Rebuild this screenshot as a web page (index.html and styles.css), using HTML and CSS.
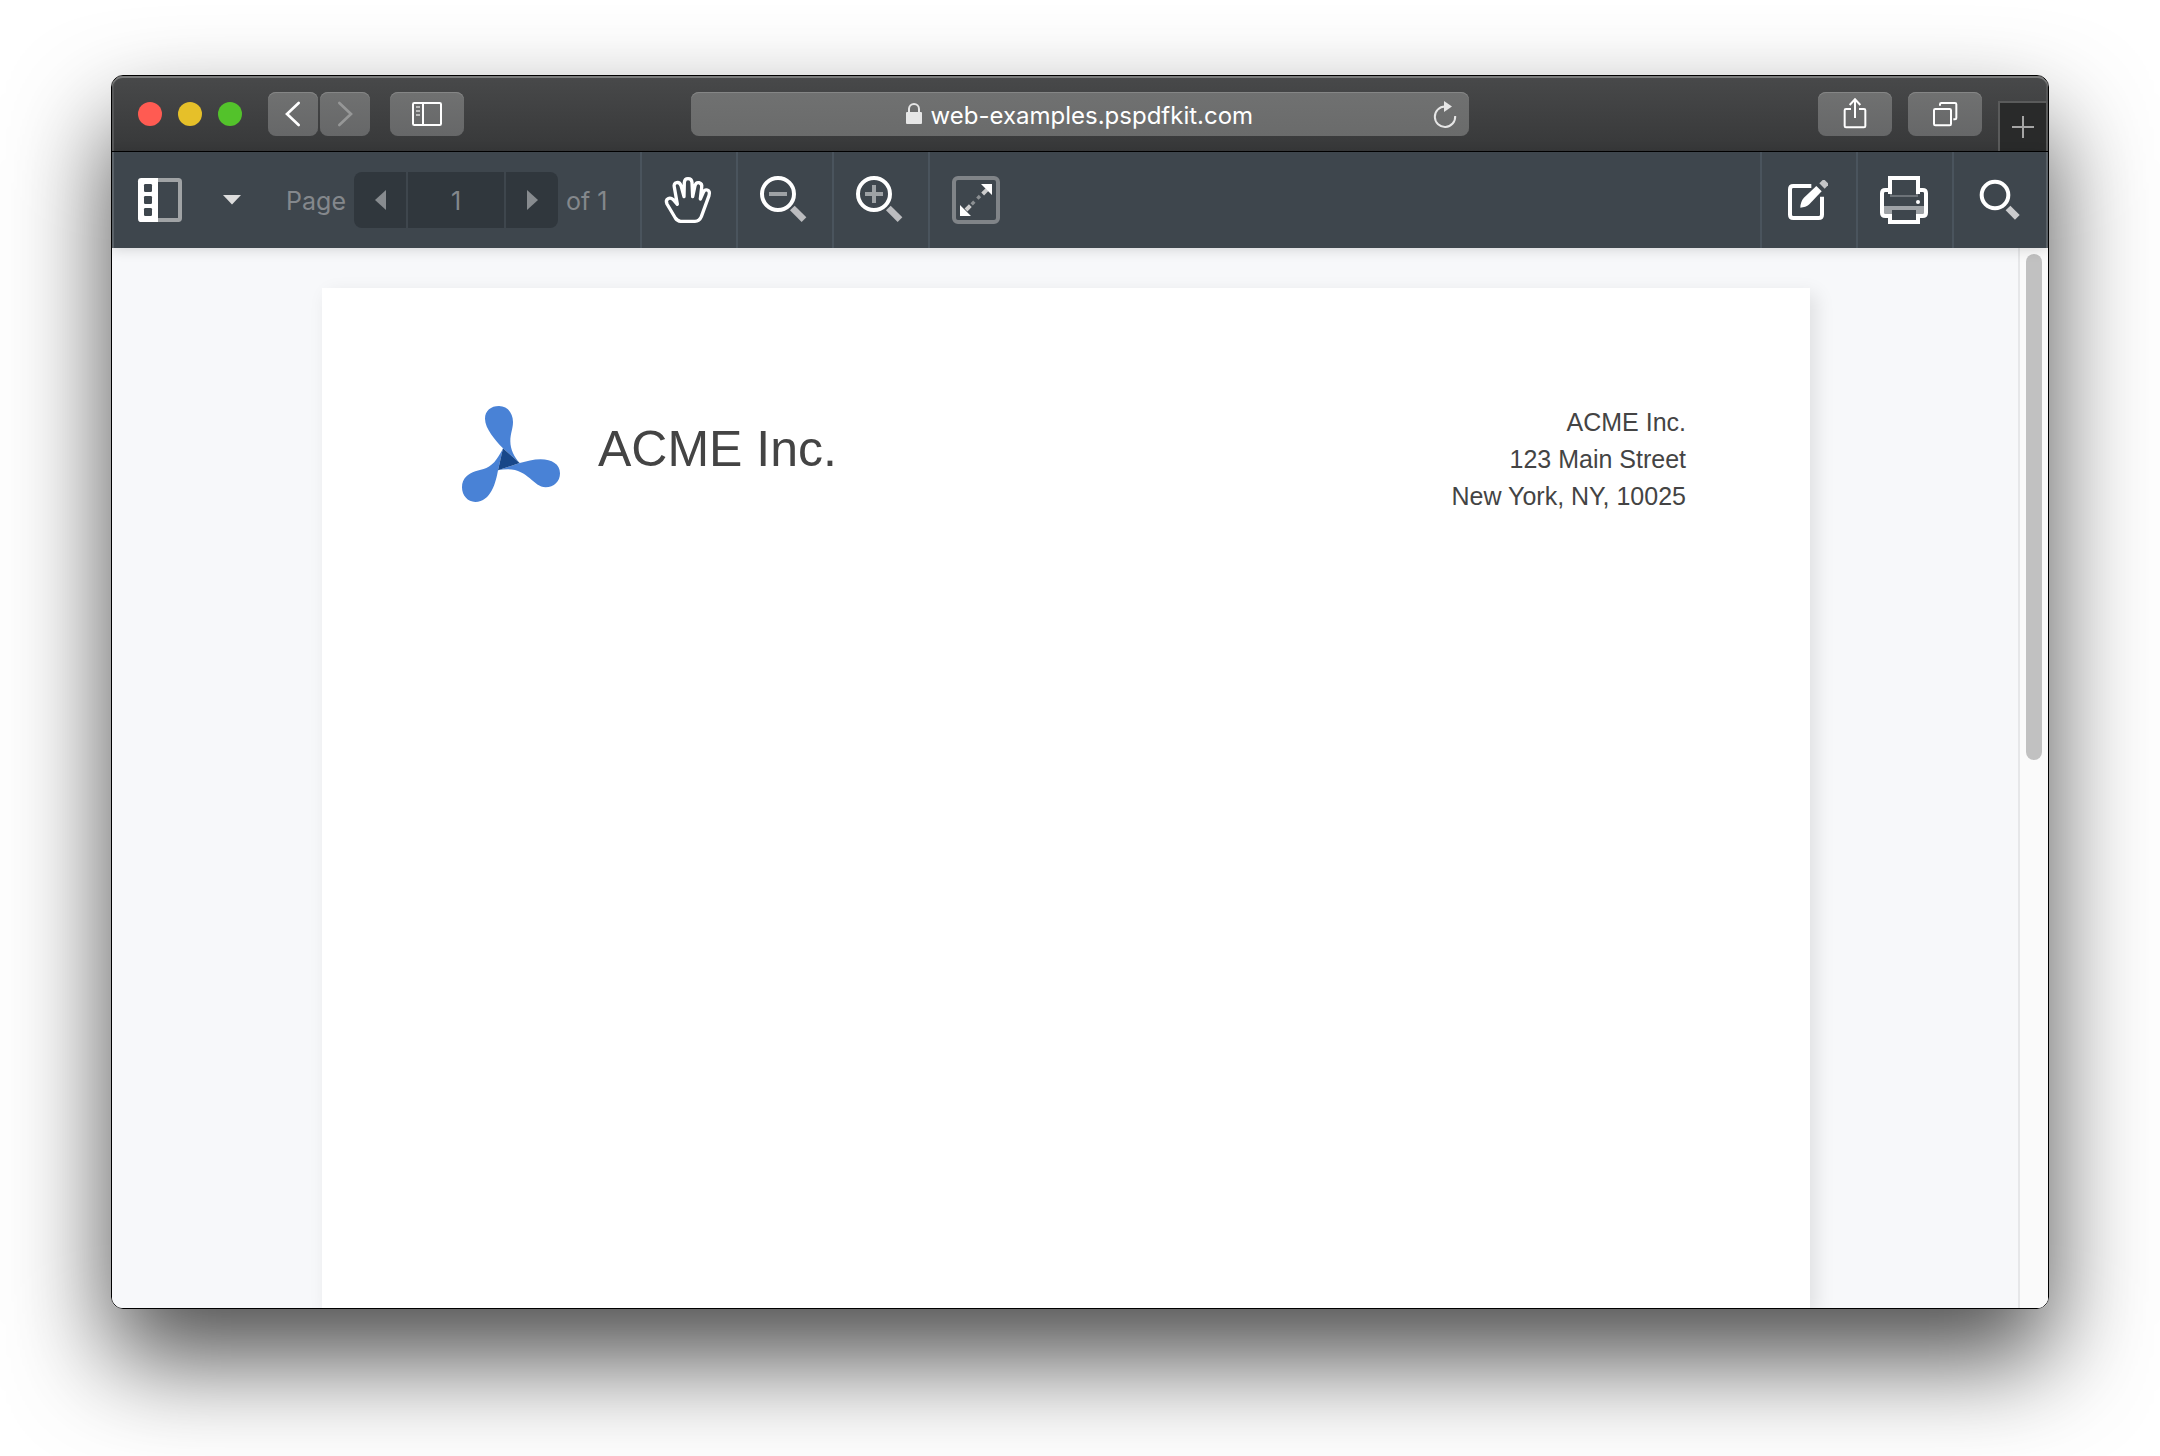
FILE: index.html
```html
<!DOCTYPE html>
<html lang="en">
<head>
<meta charset="utf-8">
<title>web-examples.pspdfkit.com</title>
<link rel="stylesheet" href="styles.css">
</head>
<body>
<div class="window">
  <header class="titlebar">
    <div class="lights">
      <button class="light light-close" aria-label="Close"></button>
      <button class="light light-minimize" aria-label="Minimize"></button>
      <button class="light light-zoom" aria-label="Zoom"></button>
    </div>
    <div class="history">
      <button class="chrome-button chrome-narrow" aria-label="Back">
        <svg width="50" height="44" viewBox="504 96 150 132"><path d="M596 129 L561 162 L596 195" fill="none" stroke="#fff" stroke-width="8" stroke-linecap="round"/></svg>
      </button>
      <button class="chrome-button chrome-narrow" aria-label="Forward">
        <svg width="50" height="44" viewBox="660 96 150 132"><path d="M718 129 L753 162 L718 195" fill="none" stroke="#969797" stroke-width="8" stroke-linecap="round"/></svg>
      </button>
    </div>
    <button class="chrome-button" aria-label="Show sidebar">
      <svg width="74" height="44" viewBox="870 96 222 132"><g fill="none" stroke="#fff" stroke-width="6"><rect x="939" y="129" width="84" height="66" rx="4"/><path d="M969 129V195"/></g><path d="M948 141H960M948 153H960M948 165H960" stroke="#bbb" stroke-width="6"/></svg>
    </button>
    <div class="address-slot">
      <div class="address-bar">
        <svg class="lock" width="18" height="22" viewBox="0 0 18 22"><path d="M4 10V6a5 5 0 0 1 10 0v4" fill="none" stroke="#e6e6e6" stroke-width="2"/><rect x="1" y="9" width="16" height="12" rx="1" fill="#e6e6e6"/></svg>
        <input class="address" type="text" aria-label="Address" value="web-examples.pspdfkit.com">
        <button class="reload" aria-label="Reload">
          <svg width="26" height="28" viewBox="0 0 26 28"><path d="M13 6.500A10.200 10.200 0 1 0 23.200 16" fill="none" stroke="#e6e6e6" stroke-width="2"/><path d="M12 1L20 6.500L12 12Z" fill="#e6e6e6"/></svg>
        </button>
      </div>
    </div>
    <div class="chrome-actions">
      <button class="chrome-button" aria-label="Share">
        <svg width="74" height="44" viewBox="234 96 222 132"><g fill="none" stroke="#fff" stroke-width="6"><path d="M333 147H318Q314 147 314 151V198Q314 202 318 202H372Q376 202 376 198V151Q376 147 372 147H357"/><path d="M345 174V120M329 135L345 118L361 135"/></g></svg>
      </button>
      <button class="chrome-button" aria-label="Show all tabs">
        <svg width="74" height="44" viewBox="504 96 222 132"><g fill="none" stroke="#fff" stroke-width="6"><rect x="582" y="147" width="51" height="49" rx="4"/><path d="M600 137V133Q600 129 604 129H645Q649 129 649 133V174Q649 178 645 178H640"/></g></svg>
      </button>
    </div>
    <button class="new-tab" aria-label="New tab">
      <svg width="22" height="22" viewBox="0 0 22 22"><path d="M11 0V22M0 11H22" stroke="#a5a5a5" stroke-width="2"/></svg>
    </button>
  </header>

  <nav class="toolbar" aria-label="Document tools">
    <button class="sidebar-toggle" aria-label="Sidebar">
      <svg width="44" height="44" viewBox="114 354 132 132"><path d="M174 360H235Q240 360 240 365V475Q240 480 235 480H174" fill="none" stroke="#a0a3a5" stroke-width="12"/><path d="M124 354H174V486H124Q114 486 114 476V364Q114 354 124 354Z" fill="#fff"/><g fill="#3e464d"><rect x="132" y="372" width="24" height="24" rx="4"/><rect x="132" y="408" width="24" height="24" rx="4"/><rect x="132" y="444" width="24" height="24" rx="4"/></g></svg>
      <svg width="18" height="10" viewBox="0 0 18 10"><path d="M0 0H18L9 9.500Z" fill="#ddd"/></svg>
    </button>
    <div class="pager">
      <label class="pager-label" for="page-number">Page</label>
      <div class="pager-control">
        <button class="pager-step" aria-label="Previous page"><svg width="11" height="20" viewBox="0 0 11 20"><path d="M11 0V20L0 10Z" fill="#878b8f"/></svg></button>
        <input class="pager-input" id="page-number" type="text" value="1">
        <button class="pager-step" aria-label="Next page"><svg width="11" height="20" viewBox="0 0 11 20"><path d="M0 0V20L11 10Z" fill="#878b8f"/></svg></button>
      </div>
      <span class="pager-total">of 1</span>
    </div>
    <button class="tool" aria-label="Pan">
      <svg width="48" height="48" viewBox="75 78 144 144"><path d="M122 214Q112 213 106 204L81 162Q76 150 84 146Q92 142 100 149L112 163L103 112Q100 100 110 98Q119 96 123 107L132 140L133 97Q134 86 144 86Q155 86 156 97L158 140L165 107Q168 96 177 98Q187 101 185 112L181 147L190 127Q194 118 202 120Q211 123 207 137L184 200Q178 214 165 214Z" fill="none" stroke="#fff" stroke-width="10" stroke-linejoin="round"/></svg>
    </button>
    <button class="tool" aria-label="Zoom out">
      <svg width="48" height="48" viewBox="363 78 144 144"><circle cx="414" cy="132" r="48" fill="none" stroke="#fff" stroke-width="12"/><path d="M387 132H441" stroke="#9ea2a5" stroke-width="12"/><path d="M457 174L492 209" stroke="#bbbcbf" stroke-width="20"/></svg>
    </button>
    <button class="tool" aria-label="Zoom in">
      <svg width="48" height="48" viewBox="651 78 144 144"><circle cx="702" cy="132" r="48" fill="none" stroke="#fff" stroke-width="12"/><path d="M675 132H729M702 105V159" stroke="#9ea2a5" stroke-width="12"/><path d="M745 174L780 209" stroke="#bbbcbf" stroke-width="20"/></svg>
    </button>
    <button class="tool" aria-label="Fit page">
      <svg width="48" height="48" viewBox="939 78 144 144"><rect x="942" y="84" width="132" height="132" rx="12" fill="none" stroke="#808488" stroke-width="12"/><path d="M978 180L991 167M1028 132L1041 119" stroke="#ccc" stroke-width="12"/><path d="M995 163L1003 155M1012 146L1020 138" stroke="#8b8f92" stroke-width="10"/><path d="M960 165V198H993ZM1023 102H1056V135Z" fill="#fff"/></svg>
    </button>
    <div class="spacer"></div>
    <button class="tool" aria-label="Annotate">
      <svg width="48" height="48" viewBox="135 348 144 144"><path d="M214 378H160Q150 378 150 388V464Q150 474 160 474H236Q246 474 246 464V410" fill="none" stroke="#fff" stroke-width="12"/><path d="M181 443Q181 426 191 414L229 378L245 394L208 433Q197 443 181 443Z" fill="#fff"/><path d="M238 370L248 360H254L264 370V376L254 386Z" fill="#c4c5c7"/></svg>
    </button>
    <button class="tool" aria-label="Print">
      <svg width="48" height="48" viewBox="423 348 144 144"><path d="M432 438H552V462H432Z" fill="#9fa3a7"/><path d="M456 450H528V480H456Z" fill="#3e464d"/><path d="M453 396V408H531V396" fill="none" stroke="#6c7278" stroke-width="6"/><path d="M450 402V354H534V402M450 390H436Q426 390 426 400V458Q426 468 436 468H450V486H534V468H548Q558 468 558 458V400Q558 390 548 390H534" fill="none" stroke="#fff" stroke-width="12"/><circle cx="534" cy="426" r="6" fill="#fff"/></svg>
    </button>
    <button class="tool" aria-label="Search">
      <svg width="48" height="48" viewBox="711 348 144 144"><circle cx="765" cy="405" r="40" fill="none" stroke="#fff" stroke-width="12"/><path d="M804 444L832 472" stroke="#cbccce" stroke-width="20"/></svg>
    </button>
  </nav>

  <main class="viewer">
    <div class="canvas">
      <article class="sheet">
        <header class="letterhead">
          <div class="brand">
            <svg width="98" height="98" viewBox="66 71 294 294"><g fill="#4982d6"><path d="M189 204C166 179 135 145 135 115C135 91 153 77 177 77C202 77 219 98 219 125C219 145 211 160 211 183C211 207 223 231 239 248Z"/><path d="M239 248C260 243 280 237 302 237C336 237 360 252 360 279C360 304 342 321 317 321C280 321 265 267 203 267C193 267 183 268 174 270Z"/><path d="M174 270C168 305 153 365 106 365C83 365 66 345 66 321C66 294 85 280 106 273C128 267 151 264 170 236C178 225 184 215 189 204Z"/></g><path d="M189 204L239 248L174 270Z" fill="#184789"/></svg>
            <span class="brand-name">ACME Inc.</span>
          </div>
          <address class="sender">ACME Inc.<br>123 Main Street<br>New York, NY, 10025</address>
        </header>
      </article>
    </div>
    <div class="scroll-track"><div class="scroll-thumb"></div></div>
  </main>
</div>
</body>
</html>
```
FILE: styles.css
```css
*, *::before, *::after {
  box-sizing: border-box;
}

body {
  display: flex;
  min-height: 100vh;
  margin: 0;
  padding: 75px 111px 147px;
  background: #fff;
  font-family: Inter, "Liberation Sans", sans-serif;
}

button {
  display: flex;
  align-items: center;
  justify-content: center;
  flex: none;
  margin: 0;
  padding: 0;
  border: 0;
  background: none;
}

svg {
  display: block;
  flex: none;
  overflow: visible;
}

.window {
  display: flex;
  flex: 1;
  flex-direction: column;
  min-width: 0;
  overflow: hidden;
  border: 1px solid #000;
  border-radius: 12px;
  box-shadow: 0 50px 100px rgba(0, 0, 0, 0.7);
}

/* Browser chrome */

.titlebar {
  display: flex;
  align-items: flex-start;
  height: 76px;
  padding: 16px 0 0 26px;
  border-bottom: 1px solid #000;
  border-radius: 11px 11px 0 0;
  background: linear-gradient(#48494a, #373839);
  box-shadow: inset 0 2px #7b7c7c, inset 2px 0 #555657, inset -2px 0 #555657;
}

.lights {
  display: flex;
  gap: 16px;
  padding: 10px 26px 10px 0;
}

.light {
  width: 24px;
  height: 24px;
  border-radius: 50%;
}

.light-close {
  background: #ff5b52;
}

.light-minimize {
  background: #e6c029;
}

.light-zoom {
  background: #53c22b;
}

.history {
  display: flex;
  gap: 2px;
  margin-right: 20px;
}

.chrome-button {
  width: 74px;
  height: 44px;
  border-radius: 8px;
  background: linear-gradient(#707171, #666768);
  box-shadow: inset 0 1px #858686;
}

.chrome-narrow {
  width: 50px;
}

.address-slot {
  display: flex;
  flex: 1;
  justify-content: center;
  min-width: 0;
  padding-right: 123px;
}

.address-bar {
  position: relative;
  display: flex;
  align-items: center;
  justify-content: center;
  gap: 8px;
  width: 778px;
  height: 44px;
  border-radius: 8px;
  background: linear-gradient(#707171, #6a6b6b);
  box-shadow: inset 0 1px #858686;
}

.address {
  width: 324px;
  height: 44px;
  padding: 2px 0 0;
  border: 0;
  background: none;
  color: #fff;
  font: 24px/42px Inter, sans-serif;
}

.reload {
  position: absolute;
  top: 8px;
  right: 11px;
}

.chrome-actions {
  display: flex;
  gap: 16px;
  margin-right: 16px;
}

.new-tab {
  align-self: flex-end;
  width: 50px;
  height: 50px;
  border: solid #5a5b5b;
  border-width: 2px 2px 0 2px;
  background: #292a2a;
}

/* Viewer toolbar */

.toolbar {
  position: relative;
  z-index: 1;
  display: flex;
  align-items: stretch;
  height: 96px;
  background: #3e464d;
  box-shadow: inset 2px 0 #5b6268, inset -2px 0 #5b6268, 0 2px 12px rgba(0, 0, 0, 0.14);
}

.sidebar-toggle {
  gap: 41px;
  padding: 0 0 0 26px;
}

.pager {
  display: flex;
  align-items: center;
  width: 399px;
  color: #84888c;
  font-size: 25px;
}

.pager-label {
  width: 113px;
  padding: 2px 8px 0 0;
  text-align: right;
}

.pager-control {
  display: flex;
  gap: 2px;
  height: 56px;
  overflow: hidden;
  border-radius: 8px;
}

.pager-step {
  width: 52px;
  background: #30373d;
}

.pager-input {
  width: 96px;
  padding: 2px 0 0;
  border: 0;
  border-radius: 0;
  background: #30373d;
  color: inherit;
  font: inherit;
  text-align: center;
}

.pager-total {
  padding: 2px 0 0 8px;
}

.tool {
  width: 96px;
  border-left: 2px solid #4a545d;
}

.spacer {
  flex: 1;
}

/* Document */

.viewer {
  display: flex;
  flex: 1;
  background: #f7f8fa;
}

.canvas {
  display: flex;
  flex: 1;
  justify-content: center;
  min-width: 0;
  padding: 40px 0 0 2px;
  overflow: hidden;
}

.sheet {
  flex: 0 1 1488px;
  background: #fff;
  box-shadow: 6px 6px 18px rgba(0, 0, 0, 0.1);
}

.letterhead {
  display: flex;
  align-items: flex-start;
  justify-content: space-between;
  padding: 116px 124px 0 140px;
  color: #444;
  font-family: "Liberation Sans", Arial, sans-serif;
}

.brand {
  display: flex;
  gap: 38px;
}

.brand-name {
  font-size: 50px;
  line-height: 90px;
}

.sender {
  font-size: 25px;
  font-style: normal;
  line-height: 37px;
  text-align: right;
}

.scroll-track {
  width: 30px;
  padding: 6px;
  border-left: 2px solid #e6e7e9;
  background: #fafafa;
}

.scroll-thumb {
  width: 16px;
  height: 48.300%;
  min-height: 40px;
  border-radius: 8px;
  background: #c1c1c1;
}
```
